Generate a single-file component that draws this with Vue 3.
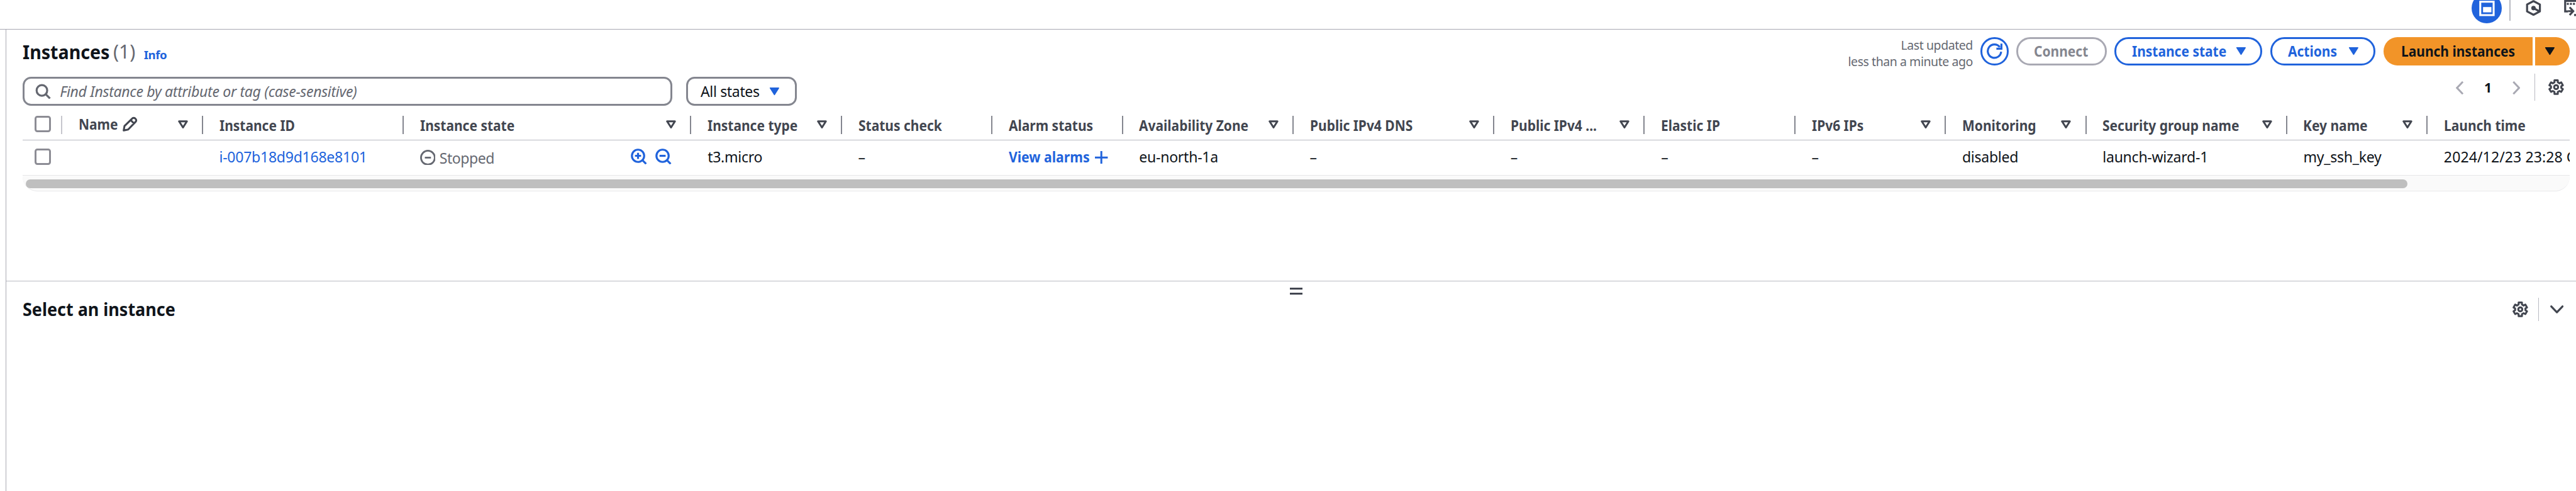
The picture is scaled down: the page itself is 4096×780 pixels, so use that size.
<script setup>
import { h } from 'vue'

const columns = [
  { label: 'Instance ID', w: 360, link: 'i-007b18d9d168e8101' },
  { label: 'Instance state', w: 516, filter: true, state: true },
  { label: 'Instance type', w: 270, filter: true, value: 't3.micro' },
  { label: 'Status check', w: 270, value: '–' },
  { label: 'Alarm status', w: 234, alarm: true },
  { label: 'Availability Zone', w: 306, filter: true, value: 'eu-north-1a' },
  { label: 'Public IPv4 DNS', w: 360, filter: true, value: '–' },
  { label: 'Public IPv4 ...', w: 270, filter: true, value: '–' },
  { label: 'Elastic IP', w: 270, value: '–' },
  { label: 'IPv6 IPs', w: 270, filter: true, value: '–' },
  { label: 'Monitoring', w: 252, filter: true, value: 'disabled' },
  { label: 'Security group name', w: 360, filter: true, value: 'launch-wizard-1' },
  { label: 'Key name', w: 252, filter: true, value: 'my_ssh_key' },
  { label: 'Launch time', w: 255, last: true, value: '2024/12/23 23:28 G' },
]

const Caret = () =>
  h('svg', { viewBox: '0 0 19 16', width: 19, height: 16 }, [
    h('path', { d: 'M2 2h15l-7.5 12z', fill: 'currentColor', stroke: 'currentColor', 'stroke-width': 2, 'stroke-linejoin': 'round' }),
  ])
const Filter = () =>
  h('svg', { viewBox: '0 0 18 15', width: 18, height: 15 }, [
    h('path', { d: 'M2 2h14l-7 11z', fill: 'none', stroke: 'currentColor', 'stroke-width': 3.4, 'stroke-linejoin': 'round' }),
  ])
const Gear = () =>
  h('svg', { viewBox: '0 0 28 28', width: 28, height: 28, fill: 'none', stroke: 'currentColor', 'stroke-width': 3.4, 'stroke-linejoin': 'round' }, [
    h('path', { d: 'M11 1.8h6v3.6l3 1.8 3.1-1.8 3 5.2-2.9 1.8v3.2l2.9 1.8-3 5.2L20 20.8l-3 1.8v3.6h-6v-3.6l-3-1.8-3.100 1.800-3-5.200 2.900-1.800v-3.200L1.900 10.600l3-5.200L8 7.200l3-1.800z' }),
    h('circle', { cx: 14, cy: 14, r: 3.6 }),
  ])
</script>

<template>
  <div class="page">
    <header class="top">
      <span class="panel-btn">
        <svg viewBox="0 0 28 28" width="28" height="28">
          <path d="M2 2h24v24H2z" fill="none" stroke="#fff" stroke-width="3.500" />
          <path d="M7 11.500h15v9.500H7z" fill="#fff" />
        </svg>
      </span>
      <i class="top-rule"></i>
      <svg class="hex" viewBox="0 0 28 30" width="28" height="30" fill="none" stroke="currentColor" stroke-width="3.600" stroke-linejoin="round">
        <path d="M14 2l11.500 6v12.500L14 26.500 2.500 20.500V8z" />
        <circle cx="14" cy="14.500" r="2.200" fill="currentColor" />
        <path d="M14 14.500l10 5.500" />
      </svg>
      <svg class="shell" viewBox="0 0 30 30" width="30" height="30" fill="none" stroke="currentColor" stroke-width="3.600">
        <path d="M30 1.500H2V20.500h5" />
        <path d="M5 7h25" stroke-dasharray="3.500 2" />
        <path d="M7 20h9M10 13l6.500 7-6.500 7M18 27h12" />
      </svg>
    </header>

    <div class="body">
      <section class="list">
        <div class="title-row">
          <h1><span>Instances</span></h1>
          <span class="count">(1)</span>
          <a class="info">Info</a>
          <div class="updated"><span>Last updated</span><span>less than a minute ago</span></div>
          <button class="btn refresh">
            <svg viewBox="0 0 30 30" width="30" height="30" fill="none" stroke="currentColor" stroke-width="3.600">
              <path d="M27 16a12 12 0 1 1-2.500-8.500" /><path d="M27.500 1.500v9H18.500" />
            </svg>
          </button>
          <button class="btn connect"><span>Connect</span></button>
          <button class="btn state"><span>Instance state</span><Caret /></button>
          <button class="btn actions"><span>Actions</span><Caret /></button>
          <div class="launch"><button class="main"><span>Launch instances</span></button><button class="more"><Caret /></button></div>
        </div>

        <div class="filter-row">
          <div class="search">
            <svg viewBox="0 0 28 28" width="28" height="28" fill="none" stroke="currentColor" stroke-width="3.600">
              <circle cx="12" cy="12" r="9.500" /><path d="M18.500 18.500l8 8" />
            </svg>
            <span>Find Instance by attribute or tag (case-sensitive)</span>
          </div>
          <div class="select"><span>All states</span><Caret /></div>
          <div class="pager">
            <svg viewBox="0 0 14 24" width="14" height="24"><path d="M12.500 1L2 12l10.500 11" /></svg>
            <b>1</b>
            <svg viewBox="0 0 14 24" width="14" height="24"><path d="M1.500 1L12 12 1.500 23" /></svg>
          </div>
          <div class="prefs"><Gear /></div>
        </div>

        <div class="table">
          <div class="tr head">
            <div class="pick"><i class="box"></i></div>
            <div class="th name">
              <span>Name</span>
              <svg class="pencil" viewBox="0 0 28 28" width="28" height="28" fill="none" stroke="currentColor" stroke-width="3.400" stroke-linejoin="round">
                <path d="M3 25l1.500-8L18.500 3.500a3.500 3.500 0 0 1 5 0l1 1a3.500 3.500 0 0 1 0 5L11 23.500zM15.500 6.500l6 6" />
              </svg>
              <Filter class="flt" />
            </div>
            <div v-for="c in columns" :key="c.label" class="th" :class="{ last: c.last }" :style="{ width: c.w + 'px' }">
              <span>{{ c.label }}</span>
              <Filter v-if="c.filter" class="flt" />
            </div>
          </div>
          <div class="tr data">
            <div class="pick"><i class="box"></i></div>
            <div class="td name"></div>
            <div v-for="c in columns" :key="c.label" class="td" :class="{ last: c.last }" :style="{ width: c.w + 'px' }">
              <a v-if="c.link" class="id">{{ c.link }}</a>
              <template v-else-if="c.state">
                <svg class="stop" viewBox="0 0 28 28" width="28" height="28" fill="none" stroke="currentColor" stroke-width="3.200">
                  <circle cx="14" cy="14" r="12.400" /><path d="M8.500 14h11" />
                </svg>
                <span class="stopped">Stopped</span>
                <span class="mags">
                  <svg v-for="n in 2" :key="n" viewBox="0 0 29 29" width="29" height="29" fill="none" stroke="currentColor" stroke-width="3.600">
                    <circle cx="13" cy="13" r="11" /><path d="M20.500 20.500l7 7" />
                    <path :d="n === 1 ? 'M7.500 13h11M13 7.500v11' : 'M7.500 13h11'" />
                  </svg>
                </span>
              </template>
              <template v-else-if="c.alarm">
                <a class="alarm">View alarms</a>
                <svg class="plus" viewBox="0 0 23 23" width="23" height="23" fill="none" stroke="currentColor" stroke-width="3.400"><path d="M0 11.500h23M11.500 0v23" /></svg>
              </template>
              <span v-else class="val">{{ c.value }}</span>
            </div>
          </div>
          <div class="track"><div class="thumb"></div></div>
        </div>
      </section>

      <section class="split">
        <div class="handle"><i></i><i></i></div>
        <div class="split-head">
          <h2><span>Select an instance</span></h2>
          <Gear class="split-gear" />
          <i class="split-rule"></i>
          <svg class="chev" viewBox="0 0 24 15" width="24" height="15" fill="none" stroke="currentColor" stroke-width="3.600" stroke-linejoin="round" stroke-linecap="round"><path d="M2 2l10 10.500L22 2" /></svg>
        </div>
      </section>
    </div>
  </div>
</template>

<style>
html, body { background: #fff; overflow: hidden; }
</style>

<style scoped>
.page {
  zoom: 0.88658;
  width: 4620px; height: 880px; overflow: hidden;
  background: #fff; color: #0f141a;
  font: 400 26px/32px "Noto Sans", "Open Sans", sans-serif;
  display: flex; flex-direction: column;
}
.page * { box-sizing: border-box; }
svg { display: block; flex: none; }
span, a { white-space: nowrap; }
button { font: inherit; padding: 0; background: none; border: 0; }

.top { height: 53px; flex: none; border-bottom: 1.200px solid #a9a9b3; display: flex; align-items: flex-start; color: #424650; overflow: hidden; }
.panel-btn { margin: -12px 0 0 4433px; width: 54px; height: 54px; flex: none; border-radius: 50%; background: #2063dc; display: flex; align-items: center; justify-content: center; }
.top-rule { width: 1.200px; height: 37px; flex: none; background: #b9bac2; margin-left: 14px; }
.hex { margin-left: 28px; }
.shell { margin-left: 40px; }

.body { flex: 1; margin-left: 10px; border-left: 1.200px solid #a9a9b3; display: flex; flex-direction: column; }
.list { height: 450px; flex: none; padding: 14px 0 0 29px; }
.title-row { height: 50px; width: 4569px; display: flex; align-items: center; }
h1 { margin: 3px 0 0; width: 163px; font-size: 34px; font-weight: 700; line-height: 50px; }
h1 span, h2 span { display: inline-block; transform: scaleX(.95); transform-origin: 0 50%; }
.count { font-size: 34px; color: #656871; width: 55px; margin-top: 2px; }
.info { font-size: 21px; font-weight: 700; color: #2063dc; position: relative; top: 6px; letter-spacing: -.5px; }
.updated { margin-left: auto; margin-right: 14px; display: flex; flex-direction: column; align-items: flex-end; font-size: 22px; line-height: 28.500px; color: #656871; padding-top: 7px; letter-spacing: -.5px; }
.btn { height: 50px; border: 3.400px solid #2063dc; border-radius: 25px; color: #2063dc; font-weight: 700; display: flex; align-items: center; flex: none; padding-left: 28px; }
.btn span, .launch span { display: block; transform: scaleX(.91); transform-origin: 0 50%; }
.btn svg { margin-left: auto; margin-right: 26px; }
.refresh { width: 50px; padding: 0; justify-content: center; }
.refresh svg { margin: 0; }
.connect { width: 162px; margin-left: 14px; border-color: #a9a9b3; color: #84868f; }
.state { width: 265px; margin-left: 14px; }
.actions { width: 188px; margin-left: 15px; }
.launch { display: flex; gap: 4px; margin-left: 15px; color: #0f141a; }
.launch button { height: 50px; background: #f29428; display: flex; align-items: center; color: inherit; font-weight: 700; }
.launch .main { width: 267px; border-radius: 25px 0 0 25px; padding-left: 31px; }
.launch .more { width: 63px; border-radius: 0 25px 25px 0; padding-left: 18px; }

.filter-row { display: flex; height: 51px; margin-top: 21px; width: 4569px; }
.search, .select { border: 3.400px solid #84868f; border-radius: 15px; display: flex; align-items: center; }
.search { width: 1166px; padding-left: 20px; color: #656871; font-style: italic; }
.search span { margin-left: 16px; letter-spacing: -.35px; }
.select { width: 198px; margin-left: 25px; padding-left: 22px; letter-spacing: -.4px; }
.select svg { color: #2063dc; margin-left: auto; margin-right: 27px; }
.pager { margin-left: auto; display: flex; align-items: center; height: 38px; color: #0f141a; }
.pager path { fill: none; stroke: #a9a9b3; stroke-width: 3.300; }
.pager b { font-size: 24px; width: 88px; text-align: center; }
.prefs { margin: -6px 0 0 25px; height: 49px; border-left: 1.200px solid #b9bac2; width: 64px; padding: 10px 0 0 24px; color: #424650; }

.table { width: 4569px; margin-top: 6px; overflow: hidden; }
.tr { display: flex; width: 4569px; }
.head { height: 57px; border-bottom: 1.200px solid #b9bac2; padding-top: 13px; color: #424650; }
.pick { width: 72px; flex: none; padding-left: 22px; }
.head .pick { border-right: 3px solid #c6c6cd; height: 32px; }
.box { display: block; width: 29px; height: 29px; border: 3.400px solid #8c8c94; border-radius: 5px; }
.th { height: 32px; flex: none; padding: 0 25px 0 29px; border-right: 3px solid #84868f; display: flex; align-items: center; font-weight: 700; }
.th.last { border: 0; }
.th span { display: block; width: 0; transform: scaleX(.91); transform-origin: 0 50%; position: relative; top: 1px; }
.flt { margin-left: auto; margin-top: -3px; }
.name { width: 252px; flex: none; }
.th.name span { top: -1px; }
.pencil { margin-left: 78px; margin-top: -2px; }
.data { height: 63px; border-bottom: 2px solid #e6e6e8; align-items: center; }
.data .pick { margin-top: -4px; }
.td { flex: none; padding-left: 29px; display: flex; align-items: center; height: 60px; margin-top: -2px; letter-spacing: -.3px; }
.td.last { letter-spacing: .1px; overflow: hidden; }
.id, .val { position: relative; top: -1px; }
.id, .alarm, .plus, .mags { color: #2063dc; }
.stop { color: #656871; }
.stopped { color: #656871; margin-left: 7px; position: relative; top: 1px; letter-spacing: -.5px; }
.mags { display: flex; gap: 15px; margin-left: auto; margin-right: 36px; margin-top: -3px; }
.alarm { font-weight: 700; letter-spacing: 0; width: 155px; transform: scaleX(.92); transform-origin: 0 50%; position: relative; top: -1px; }
.track { height: 28px; background: #fafafa; border-bottom: 2px solid #e9e9eb; border-radius: 0 0 26px 26px; padding: 6px 0 0 6px; }
.thumb { width: 4272px; height: 16px; border-radius: 8px; background: #bfbfbf; }

.split { flex: 1; border-top: 1.200px solid #b9bac2; }
.handle { width: 23px; margin: 11px 0 0 2302px; display: flex; flex-direction: column; gap: 5px; }
.handle i { height: 4px; background: #424650; }
.split-head { display: flex; align-items: center; height: 42px; margin-top: 5px; padding-left: 29px; color: #424650; }
h2 { margin: 0; width: 4466px; font-size: 32px; font-weight: 700; color: #0f141a; }
.split-rule { width: 1.200px; height: 42px; background: #b9bac2; margin: 0 20px 0 18px; }
</style>
